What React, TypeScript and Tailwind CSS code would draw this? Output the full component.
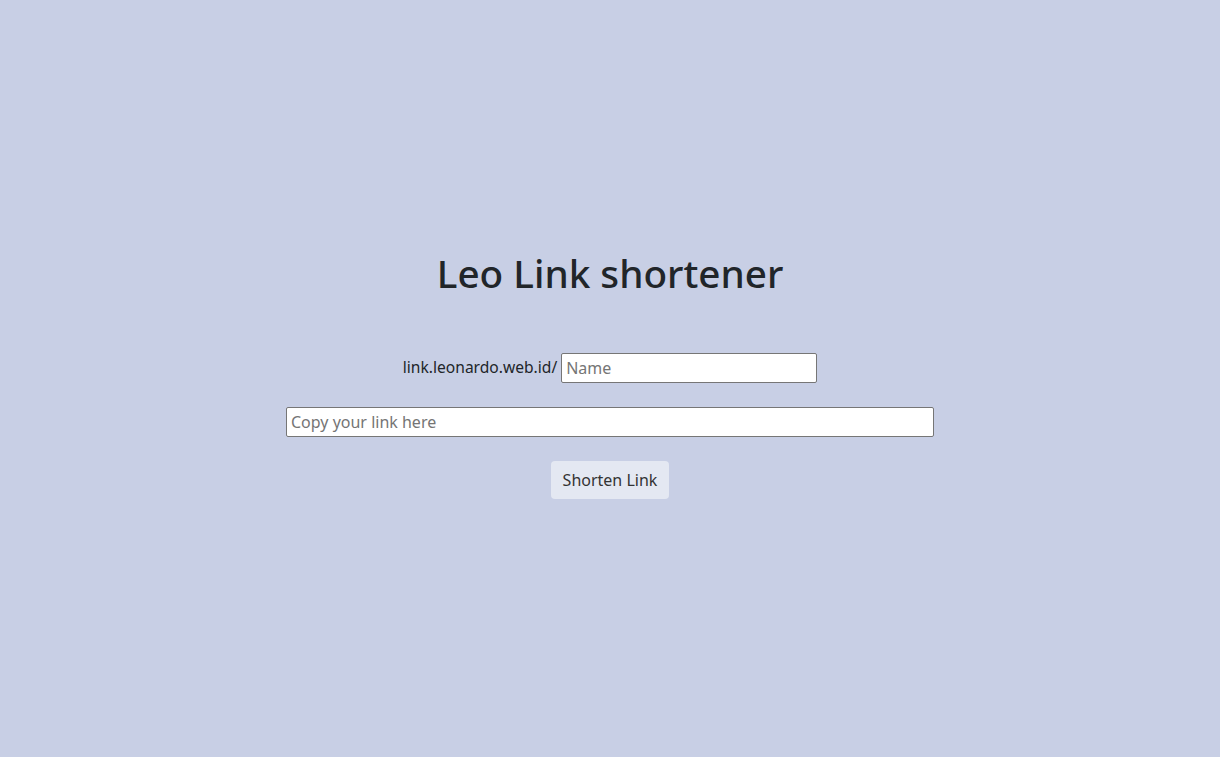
import React, { useState } from 'react';

const App: React.FC = () => {
    const [name, setName] = useState('');
    const [url, setUrl] = useState('');

    return (
        <div className="min-h-screen bg-[#c8cfe5] flex flex-col items-center justify-center pb-[10px] font-['Noto_Sans',sans-serif] text-[#212529]">
            <h1 className="text-[38.7px] leading-[48px] font-medium text-[#212529] mb-[56px]">Leo Link shortener</h1>
            <div className="flex items-center gap-1 mb-6">
                <span className="text-[15.6px]">link.leonardo.web.id/</span>
                <input
                    value={name}
                    onChange={e => setName(e.target.value)}
                    placeholder="Name"
                    className="w-[256px] h-[30px] bg-white border border-[#767676] rounded-[2px] px-1 text-base placeholder:text-[#757575] outline-none"
                />
            </div>
            <input
                value={url}
                onChange={e => setUrl(e.target.value)}
                placeholder="Copy your link here"
                className="w-[648px] h-[30px] bg-white border border-[#767676] rounded-[2px] px-1 text-base placeholder:text-[#757575] outline-none mb-6"
            />
            <button className="h-[38px] px-[12px] bg-[#e4e8f2] rounded-[4px] text-base text-[#333]">Shorten Link</button>
        </div>
    );
};

export default App;
